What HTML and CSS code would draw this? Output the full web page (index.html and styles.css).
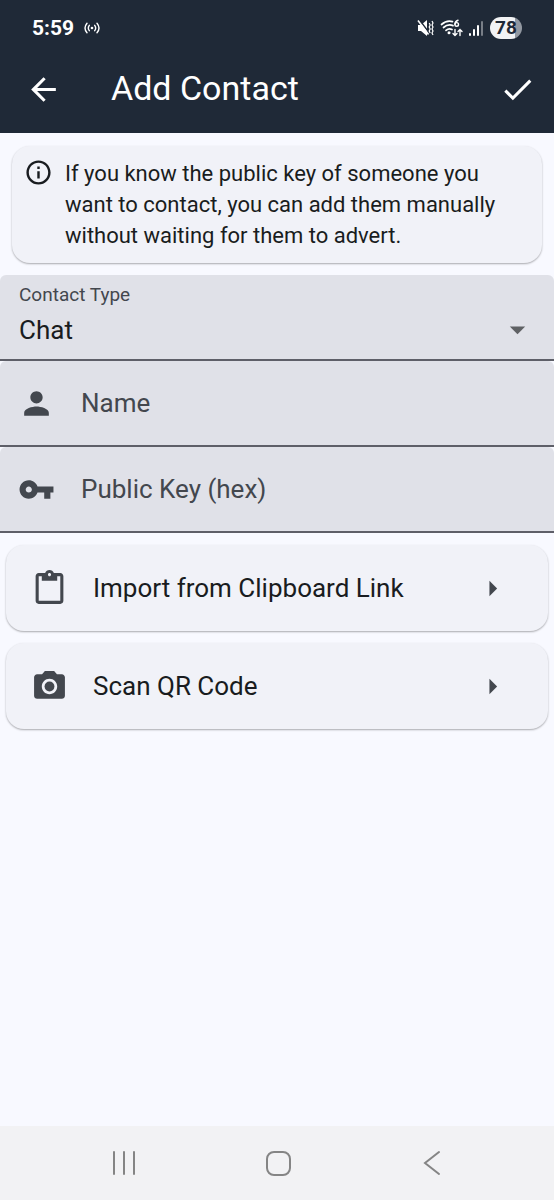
FILE: index.html
```
<!DOCTYPE html>
<html lang="en">
<head>
<meta charset="utf-8">
<meta name="viewport" content="width=device-width, initial-scale=1">
<title>Add Contact</title>
<link rel="stylesheet" href="styles.css">
</head>
<body>
<header class="header">
  <div class="status">
    <span class="clock">5:59</span>
    <svg class="hotspot" viewBox="0 0 16 12" width="16" height="12" fill="none" stroke="currentColor" stroke-width="1.4" stroke-linecap="round"><path d="M3 1.2Q-1 6 3 10.8M13 1.2Q17 6 13 10.8M5.3 3.3Q3.3 6 5.3 8.7M10.7 3.3Q12.7 6 10.7 8.7"/><circle cx="8" cy="6" r="1.3" fill="currentColor" stroke="none"/></svg>
    <div class="indicators">
      <svg viewBox="0 0 17 18" width="17" height="18" fill="none" stroke="currentColor"><path fill="currentColor" stroke="none" d="M1 6h3l6-5v16l-6-5H1z"/><path stroke="#1f2937" stroke-width="1.5" d="M2.500 1l9 12"/><path stroke-width="1.500" d="M1 1.500l10.500 14"/><path stroke-width="1.200" d="M12.200 4l1 2-1 2 1 2-1 2 1 2M15 2l1 2-1 2 1 2-1 2 1 2-1 2 1 2"/></svg>
      <svg viewBox="0 0 23 18" width="23" height="18" fill="none" stroke="currentColor" stroke-width="1.7" stroke-linecap="round"><path d="M1.500 5.500Q6.500 1 12.500 2.600M3.500 8.500Q8 4.600 13 6.600M6 11.400Q9 8.800 12 10.600"/><circle cx="9" cy="13.800" r="1.500" fill="currentColor" stroke="none"/><path stroke-width="1.500" d="M18 1.200Q15 2 15 5.200"/><circle cx="16.700" cy="5.400" r="1.800" stroke-width="1.400"/><path stroke-width="1.400" d="M15 10.500v6M13 14.500l2 2 2-2M20 16.500v-6M18 12.500l2-2 2 2"/></svg>
      <svg viewBox="0 0 15 17" width="15" height="17" fill="currentColor"><rect x="0" y="13" width="2" height="3" rx="1"/><rect x="4" y="9" width="2" height="7" rx="1"/><rect x="8" y="5" width="2" height="11" rx="1"/><rect x="12" y="1" width="2" height="15" rx="1" opacity=".4"/></svg>
      <span class="battery">78</span>
    </div>
  </div>
  <div class="appbar">
    <button class="icon-button" aria-label="Back"><svg class="icon" viewBox="0 0 24 24"><path d="M20 11H7.830l5.590-5.590L12 4l-8 8 8 8 1.410-1.410L7.830 13H20v-2z"/></svg></button>
    <h1 class="title">Add Contact</h1>
    <button class="icon-button" aria-label="Save contact"><svg class="icon" viewBox="0 0 24 24"><path d="M9 16.170L4.830 12l-1.420 1.410L9 19 21 7l-1.410-1.410z"/></svg></button>
  </div>
</header>
<main class="content">
  <section class="notice">
    <svg class="notice-icon" viewBox="0 0 24 24"><path d="M11 7h2v2h-2zm0 4h2v6h-2zm1-9C6.480 2 2 6.480 2 12s4.480 10 10 10 10-4.480 10-10S17.520 2 12 2zm0 18c-4.410 0-8-3.590-8-8s3.590-8 8-8 8 3.590 8 8-3.590 8-8 8z"/></svg>
    <p class="notice-text">If you know the public key of someone you want to contact, you can add them manually without waiting for them to advert.</p>
  </section>
  <form class="fields">
    <div class="field field-type">
      <label class="field-label" for="type">Contact Type</label>
      <div class="select-row">
        <select class="select" id="type"><option>Chat</option></select>
        <svg class="icon drop" viewBox="0 0 24 24"><path d="M7 10l5 5 5-5z"/></svg>
      </div>
    </div>
    <label class="field">
      <svg class="icon" viewBox="0 0 24 24"><path d="M12 12c2.210 0 4-1.790 4-4s-1.790-4-4-4-4 1.790-4 4 1.790 4 4 4zm0 2c-2.670 0-8 1.340-8 4v2h16v-2c0-2.660-5.330-4-8-4z"/></svg>
      <input class="input" type="text" placeholder="Name" aria-label="Name">
    </label>
    <label class="field">
      <svg class="icon" viewBox="0 0 24 24"><path d="M12.650 10C11.830 7.670 9.610 6 7 6c-3.310 0-6 2.690-6 6s2.690 6 6 6c2.610 0 4.830-1.670 5.650-4H17v4h4v-4h2v-4H12.650zM7 14c-1.100 0-2-.9-2-2s.9-2 2-2 2 .9 2 2-.9 2-2 2z"/></svg>
      <input class="input" type="text" placeholder="Public Key (hex)" aria-label="Public Key (hex)">
    </label>
  </form>
  <div class="actions">
    <button class="action">
      <svg class="icon" viewBox="0 0 24 24"><path d="M19 2h-4.180C14.400.84 13.300 0 12 0c-1.300 0-2.400.84-2.820 2H5c-1.100 0-2 .9-2 2v16c0 1.100.9 2 2 2h14c1.100 0 2-.9 2-2V4c0-1.100-.9-2-2-2zm-7 0c.55 0 1 .45 1 1s-.45 1-1 1-1-.45-1-1 .45-1 1-1zm7 18H5V4h2v3h10V4h2v16z"/></svg>
      <span class="action-text">Import from Clipboard Link</span>
      <svg class="icon" viewBox="0 0 24 24"><path d="M10 17l5-5-5-5v10z"/></svg>
    </button>
    <button class="action">
      <svg class="icon" viewBox="0 0 24 24"><circle cx="12" cy="12" r="3.200"/><path d="M9 2L7.170 4H4c-1.100 0-2 .9-2 2v12c0 1.100.9 2 2 2h16c1.100 0 2-.9 2-2V6c0-1.100-.9-2-2-2h-3.170L15 2H9zm3 15c-2.760 0-5-2.240-5-5s2.240-5 5-5 5 2.240 5 5-2.240 5-5 5z"/></svg>
      <span class="action-text">Scan QR Code</span>
      <svg class="icon" viewBox="0 0 24 24"><path d="M10 17l5-5-5-5v10z"/></svg>
    </button>
  </div>
</main>
<nav class="navbar">
  <button class="nav-button" aria-label="Recent apps"><svg viewBox="0 0 28 28" width="28" height="28"><path d="M4 3v22M14 3v22M24 3v22"/></svg></button>
  <button class="nav-button" aria-label="Home"><svg viewBox="0 0 28 28" width="28" height="28"><rect x="3" y="3" width="23" height="23" rx="7"/></svg></button>
  <button class="nav-button" aria-label="Go back"><svg viewBox="0 0 28 28" width="28" height="28"><path d="M21 3L7 14l14 11"/></svg></button>
</nav>
</body>
</html>
```
FILE: styles.css
```
* { box-sizing: border-box; }

body {
  margin: 0;
  min-height: 100vh;
  display: flex;
  flex-direction: column;
  background: #f8f9ff;
  color: #191c20;
  font-family: Roboto, "Noto Sans", sans-serif;
  font-size: 22px;
}

button, input, select {
  margin: 0;
  padding: 0;
  border: 0;
  background: none;
  color: inherit;
  font: inherit;
}

svg { flex: none; display: block; }

.icon {
  width: 37px;
  height: 37px;
  fill: currentColor;
}

.header {
  background: #1f2937;
  color: #fff;
}

.status {
  height: 46px;
  padding: 10px 32px 0;
  display: flex;
  align-items: center;
  gap: 10px;
}

.clock {
  font-size: 21px;
  font-weight: 700;
}

.indicators {
  margin-left: auto;
  display: flex;
  align-items: center;
  gap: 6px;
}

.battery {
  width: 32px;
  height: 22px;
  border-radius: 11px;
  background: linear-gradient(90deg, #f2f3f5 78%, #9298a1 78%);
  color: #1f2937;
  font-size: 19px;
  font-weight: 700;
  line-height: 22px;
  text-align: center;
}

.appbar {
  height: 87px;
  padding: 0 18px 0 25px;
  display: flex;
  align-items: center;
}

.title {
  flex: 1;
  margin: 0;
  padding: 0 0 3px 49px;
  font-size: 34px;
  font-weight: 400;
  line-height: 40px;
}

.content { flex: 1; }

.notice, .action {
  border-radius: 18px;
  background: #f1f2f8;
  box-shadow: 0 1px 2px rgba(0, 0, 0, .32);
}

.notice {
  margin: 13px 12px 12px;
  padding: 12px;
  display: flex;
  gap: 12px;
}

.notice-icon {
  width: 29px;
  height: 29px;
  fill: currentColor;
}

.notice-text {
  margin: 0;
  font-size: 22px;
  line-height: 31px;
}

.fields {
  display: flex;
  flex-direction: column;
  color: #43474e;
}

.field {
  height: 86px;
  padding: 0 18px;
  display: flex;
  align-items: center;
  gap: 26px;
  border-bottom: 2px solid #5e5f68;
  border-radius: 6px 6px 0 0;
  background: #e0e1e8;
}

.field-type {
  padding: 8px 18px 0 19px;
  flex-direction: column;
  align-items: stretch;
  gap: 4px;
}

.field-label {
  font-size: 19px;
  line-height: 24px;
}

.select-row {
  display: grid;
  align-items: center;
}

.select {
  grid-area: 1 / 1;
  appearance: none;
  color: #191c20;
  font-size: 26px;
  line-height: 36px;
}

.drop {
  grid-area: 1 / 1;
  justify-self: end;
  color: #5f6164;
  pointer-events: none;
}

.input {
  flex: 1;
  min-width: 0;
  height: 60px;
  font-size: 26px;
}

.input::placeholder {
  color: #43474e;
  opacity: 1;
}

.actions {
  padding: 12px 6px;
  display: flex;
  flex-direction: column;
  gap: 12px;
}

.action {
  height: 86px;
  padding: 0 37px 0 25px;
  display: flex;
  align-items: center;
  gap: 25px;
  color: #43474e;
  text-align: left;
}

.action-text {
  flex: 1;
  color: #191c20;
  font-size: 26px;
}

.navbar {
  height: 74px;
  padding: 0 45px 0 47px;
  display: flex;
  align-items: center;
  background: #f2f2f4;
}

.nav-button {
  flex: 1;
  height: 48px;
  display: flex;
  align-items: center;
  justify-content: center;
  color: #858585;
}

.nav-button svg {
  fill: none;
  stroke: currentColor;
  stroke-width: 2;
  stroke-linecap: round;
}
```
